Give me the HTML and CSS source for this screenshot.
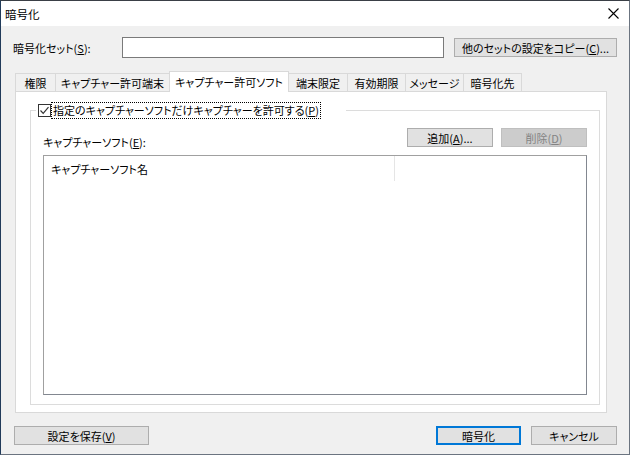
FILE: index.html
```html
<!DOCTYPE html>
<html lang="ja">
<head>
<meta charset="utf-8">
<title>暗号化</title>
<link rel="stylesheet" href="styles.css">
</head>
<body>
<div class="window">
  <div class="titlebar">
    <span class="title">暗号化</span>
    <svg class="close" width="11" height="11" viewBox="0 0 11 11"><path d="M0.5 0.5 L10.5 10.5 M10.5 0.5 L0.5 10.5" stroke="#000" stroke-width="1.1" fill="none"/></svg>
  </div>
  <div class="body">
    <div class="row1">
      <span class="setlabel">暗号化セット(<u>S</u>):</span>
      <div class="input"></div>
      <button class="btn copy">他のセットの設定をコピー(<u>C</u>)...</button>
    </div>
    <div class="tabs">
      <div class="tab w40">権限</div>
      <div class="tab w114">キャプチャー許可端末</div>
      <div class="tab sel">キャプチャー許可ソフト</div>
      <div class="tab w59">端末限定</div>
      <div class="tab w58">有効期限</div>
      <div class="tab w58">メッセージ</div>
      <div class="tab w58">暗号化先</div>
    </div>
    <div class="panel">
      <fieldset class="group">
        <legend class="legend">
          <span class="check"><svg width="11" height="11" viewBox="0 0 11 11"><path d="M1.5 5.5 L4.2 8.3 L9.5 2.2" stroke="#333" stroke-width="1.2" fill="none"/></svg></span>
          <span class="focus">指定のキャプチャーソフトだけキャプチャーを許可する(<u>P</u>)</span>
        </legend>
        <div class="listrow">
          <span class="listlabel">キャプチャーソフト(<u>E</u>):</span>
          <div class="listbtns">
            <button class="btn add">追加(<u>A</u>)...</button>
            <button class="btn del" disabled>削除(<u>D</u>)</button>
          </div>
        </div>
        <div class="listbox">
          <div class="header">
            <div class="col">キャプチャーソフト名</div>
          </div>
        </div>
      </fieldset>
    </div>
    <div class="footer">
      <button class="btn save">設定を保存(<u>V</u>)</button>
      <div class="rightbtns">
        <button class="btn ok">暗号化</button>
        <button class="btn cancel">キャンセル</button>
      </div>
    </div>
  </div>
</div>
</body>
</html>
```

FILE: styles.css
```css
* { box-sizing: border-box; }
html, body { margin: 0; padding: 0; }
body {
  font-family: "Noto Sans CJK JP", "Noto Sans", sans-serif;
  font-size: 11px;
  font-feature-settings: "palt";
  color: #000;
  background: #f0f0f0;
}
u { text-decoration-thickness: 1px; text-underline-offset: 1px; }
.window {
  width: 630px;
  height: 455px;
  border: 1px solid #6b7480;
  border-left-color: #213b5a;
  border-top-color: #3a3f46;
  background: #f0f0f0;
  display: flex;
  flex-direction: column;
  overflow: hidden;
}
.titlebar {
  height: 25px;
  background: #fff;
  display: flex;
  align-items: center;
  justify-content: space-between;
  padding: 0 10px 0 4px;
}
.title { font-size: 11.5px; line-height: 16px; }
.close { display: block; margin-top: -1px; }
.body { flex: 1; display: flex; flex-direction: column; }
.row1 {
  display: flex;
  align-items: center;
  margin: 11px 0 0 12px;
  height: 21px;
}
.setlabel { width: 109px; line-height: 16px; }
.input {
  width: 322px;
  height: 21px;
  background: #fff;
  border: 1px solid #7a7a7a;
}
.btn {
  font-family: inherit;
  font-size: 11px;
  font-feature-settings: "palt";
  color: #000;
  background: #e1e1e1;
  border: 1px solid #adadad;
  padding: 0;
  height: 19px;
  line-height: 16px;
  margin: 0;
  display: flex;
  align-items: center;
  justify-content: center;
  white-space: nowrap;
}
.copy { width: 163px; margin-left: 10px; }
.tabs {
  display: flex;
  align-items: flex-end;
  margin: 13px 0 0 14px;
  height: 20px;
  position: relative;
  z-index: 1;
}
.tab {
  height: 18px;
  border: 1px solid #d9d9d9;
  border-bottom: none;
  margin-left: -1px;
  background: #f0f0f0;
  display: flex;
  align-items: center;
  justify-content: center;
  line-height: 16px;
  white-space: nowrap;
}
.tab:first-child { margin-left: 0; }
.w40 { width: 41px; }
.w114 { width: 115px; }
.w59 { width: 60px; }
.w58 { width: 59px; }
.tab.sel {
  width: 120px;
  height: 21px;
  background: #fff;
  margin-bottom: -1px;
  padding-bottom: 1px;
}
.panel {
  margin-left: 14px;
  width: 592px;
  height: 322px;
  background: #fff;
  border: 1px solid #d9d9d9;
}
.group {
  margin: 10px 0 0 14px;
  width: 570px;
  height: 303px;
  border: 1px solid #dcdcdc;
  padding: 0 12px 0 12px;
  min-inline-size: 0;
}
.legend {
  margin-left: -7px;
  width: 310px;
  padding: 0 0 0 2px;
  height: 17px;
  display: flex;
  align-items: center;
  background: #fff;
}
.check {
  width: 13px;
  height: 13px;
  border: 1px solid #333;
  display: flex;
  align-items: center;
  justify-content: center;
  background: #fff;
}
.check svg { display: block; }
.focus {
  margin-left: 1px;
  outline: 1px dotted #000;
  outline-offset: 0;
  line-height: 15px;
  padding: 0 1px;
  white-space: nowrap;
}
.listrow {
  display: flex;
  justify-content: space-between;
  margin-top: 9px;
  height: 19px;
}
.listlabel { line-height: 16px; margin-top: 6px; }
.listbtns { display: flex; gap: 8px; }
.add, .del { width: 86px; }
.del {
  background: #cccccc;
  border-color: #bfbfbf;
  color: #838383;
}
.listbox {
  margin-top: 8px;
  width: 544px;
  height: 240px;
  background: #fff;
  border: 1px solid #828790;
  border-top-color: #a0a0a0;
  border-left-color: #a0a0a0;
}
.header { height: 25px; display: flex; }
.col {
  width: 351px;
  height: 25px;
  border-right: 1px solid #e5e5e5;
  padding: 1px 0 0 7px;
  display: flex;
  align-items: center;
  line-height: 16px;
}
.footer {
  display: flex;
  justify-content: space-between;
  margin: 13px 12px 0 13px;
}
.save { width: 135px; }
.rightbtns { display: flex; gap: 10px; }
.ok { width: 85px; border: 2px solid #0078d7; }
.cancel { width: 86px; }
```
